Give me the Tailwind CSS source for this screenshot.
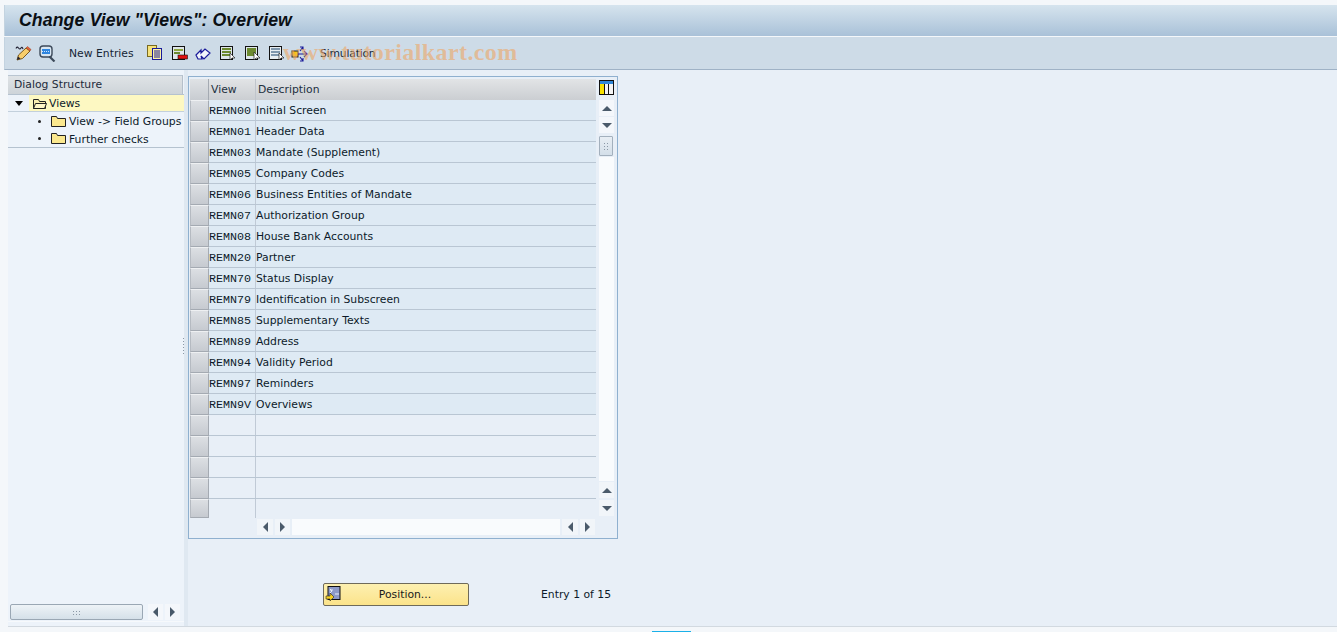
<!DOCTYPE html>
<html lang="en">
<head>
<meta charset="utf-8" />
<title>Change View "Views": Overview</title>
<script src="https://cdn.jsdelivr.net/npm/@tailwindcss/browser@4"></script>
</head>
<body class="bg-white">
<div class="relative w-[1337px] h-[632px] overflow-hidden bg-[#f4f7fa] font-['DejaVu_Sans',sans-serif] text-[10.8px] text-[#0c1a2a]">

  <!-- title bar -->
  <div class="ml-[4px] mt-[5px] h-[31px] bg-gradient-to-b from-[#d6e4ee] to-[#a9c1d8] border-l border-[#c3d3e0] pl-[14px] flex items-center">
    <h1 class="font-['Liberation_Sans',sans-serif] font-bold italic text-[17.7px] text-[#0a0f14] tracking-[0.1px]">Change View "Views": Overview</h1>
  </div>

  <!-- toolbar -->
  <div class="ml-[4px] mt-[1px] h-[33px] bg-[#cddbe7] border-b border-[#9fb2c6] border-l border-l-[#c3d3e0] flex items-center pl-[10px]">
    <svg class="w-[17px] h-[17px]" viewBox="0 0 17 17"><path d="M1 3.500q1-2.500 2.500-.5t2.500 0 2 1" fill="none" stroke="#223" stroke-width="1.100"/><path d="M2 15l1.500-5L11 3l4 3-7.500 7.500z" fill="#f7cd6a" stroke="#6b4a10" stroke-width=".9"/><path d="M2 15l1-3.500 2.500 2z" fill="#223"/><path d="M11 3l1.500-1.500 3.500 3L15 6z" fill="#e8603a" stroke="#8a3a1a" stroke-width=".5"/></svg>
    <svg class="w-[17px] h-[17px] ml-[7px]" viewBox="0 0 17 17"><rect x="1" y="1" width="12" height="11" rx="3" fill="#d8e6f2" stroke="#3d4a5a" stroke-width="1.400"/><rect x="3" y="4" width="8" height="5" fill="#2f86e0"/><path d="M3 6.500h8" stroke="#fff" stroke-width=".8" stroke-dasharray="1 1"/><path d="M10.500 11.500l5 5" stroke="#3d4a5a" stroke-width="2.200"/></svg>
    <span class="ml-[13px] w-[66px] pt-[2px] text-[#152535] whitespace-nowrap">New Entries</span>
    <svg class="w-[16px] h-[16px] ml-[12px]" viewBox="0 0 16 16"><rect x=".5" y=".5" width="9" height="11" fill="#f6e27a" stroke="#7a6a20"/><rect x="5.500" y="3.500" width="9" height="11" fill="#fbf1a8" stroke="#1a1a9a"/><path d="M7 6h6M7 8h6M7 10h6M7 12h6" stroke="#1a1a9a"/></svg>
    <svg class="w-[17px] h-[16px] ml-[8px]" viewBox="0 0 17 16"><rect x="1.500" y="1.500" width="12" height="13" fill="#dfe6ea" stroke="#111"/><rect x="3" y="4" width="9" height="2" fill="#8fa640"/><rect x="3" y="7" width="6" height="2" fill="#6d8a30"/><rect x="7" y="10" width="9.500" height="4" fill="#e01010" stroke="#111" stroke-width=".6"/></svg>
    <svg class="w-[17px] h-[15px] ml-[7px]" viewBox="0 0 17 15"><path d="M1 9l5-5v3l4-4 5 4-6 6-3-3 1 3H3z" fill="#f2f6fa" stroke="#1a1a9a" stroke-width="1.200"/></svg>
    <svg class="w-[17px] h-[16px] ml-[7px]" viewBox="0 0 17 16"><rect x="1.500" y="1.500" width="12" height="13" fill="#dfe6ea" stroke="#111"/><path d="M3 4h9M3 7h9M3 10h9" stroke="#6d8a30" stroke-width="2"/><path d="M11 8v7l2-2 3 0z" fill="#fff" stroke="#222" stroke-width=".7"/></svg>
    <svg class="w-[17px] h-[16px] ml-[8px]" viewBox="0 0 17 16"><rect x="1.500" y="1.500" width="12" height="13" fill="#dfe6ea" stroke="#111"/><rect x="3" y="3" width="9" height="8" fill="#6d8a30"/><path d="M10 7v8l2-2 4 0z" fill="#fff" stroke="#222" stroke-width=".7"/></svg>
    <svg class="w-[17px] h-[16px] ml-[7px]" viewBox="0 0 17 16"><rect x="1.500" y="1.500" width="12" height="13" fill="#e8eef2" stroke="#111"/><path d="M3 4h9M3 7h9M3 10h9" stroke="#7f97ad" stroke-width="2"/><path d="M11 8v7l2-2 3 0z" fill="#fff" stroke="#222" stroke-width=".7"/></svg>
    <svg class="w-[17px] h-[17px] ml-[6px]" viewBox="0 0 17 17"><rect x="1" y="6" width="6" height="6" fill="#f5c518" stroke="#222"/><path d="M7 9h9M13 6l3 3-3 3M9 2h3v3M12 2l-3 4M9 16h3v-3M12 16l-3-4" fill="none" stroke="#1a1a9a" stroke-width="1.100"/></svg>
    <span class="ml-[12px] pt-[2px] text-[#152535] tracking-[-0.2px]">Simulation</span>
  </div>

  <!-- body -->
  <div class="ml-[8px] h-[557px] flex bg-[#e8eff7] border-b border-[#d2d9e0]">
    <!-- left tree panel -->
    <div class="w-[176px] bg-[#edf3fa] flex flex-col pt-[5px]">
      <div class="h-[19px] mr-[1px] bg-gradient-to-b from-[#dfe3e6] to-[#ced4d9] border-t border-[#b9c5d1] border-r border-r-[#b5bfca] pl-[6px] flex items-center text-[#1c2a3a]">Dialog Structure</div>
      <div class="h-[18px] flex items-center border-b border-[#c3d0dc] border-t border-t-[#b5c2cf]">
        <span class="ml-[7px] w-0 h-0 border-x-[4px] border-x-transparent border-t-[5px] border-t-black"></span>
        <div class="ml-[6px] flex-1 h-full bg-[#fdf8c2] flex items-center pl-[3px]">
          <svg class="w-[16px] h-[13px]" viewBox="0 0 16 13"><path d="M1.500 11.500V2.500h5l1 2h6v7z" fill="#fbeeb0" stroke="#222"/><path d="M1.500 11.500l2-5h11l-2 5z" fill="#fff6c8" stroke="#222"/></svg>
          <span class="ml-[1px] pt-[2px]">Views</span>
        </div>
      </div>
      <div class="h-[18px] flex items-center whitespace-nowrap overflow-hidden">
        <span class="ml-[30px] w-[3px] h-[3px] rounded-full bg-[#222]"></span>
        <svg class="ml-[10px] w-[15px] h-[13px] shrink-0" viewBox="0 0 15 13"><path d="M.5 11.500V1.500h5l1 2h8v8z" fill="#fbe88e" stroke="#222"/></svg>
        <span class="ml-[3px] pt-[2px]">View -&gt; Field Groups</span>
      </div>
      <div class="h-[18px] flex items-center border-b border-[#b5c2cf] whitespace-nowrap">
        <span class="ml-[30px] w-[3px] h-[3px] rounded-full bg-[#222]"></span>
        <svg class="ml-[10px] w-[15px] h-[13px]" viewBox="0 0 15 13"><path d="M.5 11.500V1.500h5l1 2h8v8z" fill="#fbe88e" stroke="#222"/></svg>
        <span class="ml-[3px] pt-[4px]">Further checks</span>
      </div>
      <div class="flex-1"></div>
      <div class="h-[18px] flex items-start border-b border-[#f6f9fc] mb-[4px]">
        <div class="ml-[2px] w-[133px] h-[16px] bg-gradient-to-b from-[#eef3f7] to-[#d5e0e9] border border-[#9aa7b4] rounded-[2px] flex items-center justify-center">
          <span class="w-[10px] h-[5px] bg-[radial-gradient(#8a97a5_1px,transparent_1px)] bg-[length:3px_3px]"></span>
        </div>
        <div class="ml-[5px] w-[15px] h-[16px] bg-[#f4f7fb] flex items-center justify-center"><span class="w-0 h-0 border-y-[5px] border-y-transparent border-r-[5px] border-r-[#4a5a6a]"></span></div>
        <div class="ml-[2px] w-[15px] h-[16px] bg-[#f4f7fb] flex items-center justify-center"><span class="w-0 h-0 border-y-[5px] border-y-transparent border-l-[5px] border-l-[#4a5a6a]"></span></div>
      </div>
    </div>

    <!-- splitter -->
    <div class="w-[4px] bg-[#dfe8f1] relative">
      <span class="absolute left-[-2px] top-[267px] w-[3px] h-[18px] bg-[radial-gradient(#8a97a5_0.7px,transparent_0.8px)] bg-[length:3px_3px]"></span>
    </div>

    <!-- main area -->
    <div class="flex-1 flex flex-col pl-[0px] pt-[6px]">
      <div class="w-[430px] h-[463px] border border-[#8fb0cf] bg-[#e8eff7] flex pl-[1px] pt-[2px]">
        <div class="w-[407px]">
          <!-- table header -->
          <div class="h-[21px] flex">
            <div class="w-[19px] bg-gradient-to-b from-[#dfe2e5] to-[#c8ccd1] border-r border-[#a4aab2]"></div>
            <div class="w-[47px] bg-gradient-to-b from-[#e2e4e6] to-[#cbced2] border-r border-[#c0c5cc] pl-[2px] pt-[2px] flex items-center text-[#22303e]">View</div>
            <div class="flex-1 bg-gradient-to-b from-[#e2e4e6] to-[#cbced2] pl-[2px] pt-[2px] flex items-center text-[#22303e]">Description</div>
          </div>
          <div id="rows"></div>
        </div>
        <!-- vertical scrollbar -->
        <div class="w-[18px] ml-[3px] flex flex-col items-start">
          <svg class="w-[17px] h-[18px] -ml-[1px]" viewBox="0 0 17 18"><rect x="1" y="1" width="15" height="15" fill="#111"/><rect x="2" y="2" width="13" height="3" fill="#2f86d6"/><rect x="2" y="5" width="4" height="10" fill="#f7e000"/><rect x="7" y="5" width="3" height="10" fill="#f4f4f4"/><rect x="11" y="5" width="4" height="10" fill="#f4f4f4"/></svg>
          <div class="mt-[3px] w-[15px] h-[16px] bg-[#f4f7fb] flex items-center justify-center"><span class="w-0 h-0 border-x-[5px] border-x-transparent border-b-[5px] border-b-[#4a5a6a]"></span></div>
          <div class="mt-[1px] w-[15px] h-[16px] bg-[#f4f7fb] flex items-center justify-center"><span class="w-0 h-0 border-x-[5px] border-x-transparent border-t-[5px] border-t-[#4a5a6a]"></span></div>
          <div class="mt-[3px] w-[14px] h-[20px] bg-gradient-to-b from-[#e8eef4] to-[#d4dfe9] border border-[#a3b0bd] rounded-[1px] flex items-center justify-center">
            <span class="w-[7px] h-[9px] bg-[radial-gradient(#8a97a5_1px,transparent_1px)] bg-[length:3px_3px]"></span>
          </div>
          <div class="mt-[1px] w-[15px] h-[324px] bg-[#f9fbfd]"></div>
          <div class="mt-[1px] w-[15px] h-[16px] bg-[#f1f5f9] flex items-center justify-center"><span class="w-0 h-0 border-x-[5px] border-x-transparent border-b-[5px] border-b-[#4a5a6a]"></span></div>
          <div class="mt-[2px] w-[15px] h-[16px] bg-[#f1f5f9] flex items-center justify-center"><span class="w-0 h-0 border-x-[5px] border-x-transparent border-t-[5px] border-t-[#4a5a6a]"></span></div>
        </div>
      </div>

      <!-- position row -->
      <div class="mt-[44px] ml-[135px] flex items-center">
        <button class="w-[146px] h-[23px] bg-gradient-to-b from-[#fdf0b0] to-[#fbe38a] border border-[#6e6a5a] rounded-[2px] flex items-center relative text-[#1a1a1a]">
          <svg class="absolute left-[1px] top-[1px] w-[16px] h-[17px]" viewBox="0 0 16 17"><rect x="3" y="1.500" width="12" height="13" fill="#8d9ac8" stroke="#111"/><path d="M5 5h3M10 9h4M5 4l2 2-2 2" fill="none" stroke="#e8eef8"/><path d="M1 11h4V8l4 4-4 4v-2H1z" fill="#f5d020" stroke="#222" stroke-width=".6"/></svg>
          <span class="w-full text-center pl-[18px] pt-[2px]">Position...</span>
        </button>
        <span class="ml-[72px] pt-[2px]">Entry 1 of 15</span>
      </div>
    </div>
  </div>

  <!-- watermark -->
  <span class="absolute left-[283px] top-[36px] font-['Liberation_Serif',serif] font-bold text-[24px] leading-[32px] tracking-[0.4px] text-[#eda664]/60 pointer-events-none">www.tutorialkart.com</span>
  <span class="absolute left-[652px] top-[631px] w-[39px] h-[1px] bg-[#1ab0e8]"></span>
</div>

<script>
  const entries = [
    ['REMN00', 'Initial Screen'],
    ['REMN01', 'Header Data'],
    ['REMN03', 'Mandate (Supplement)'],
    ['REMN05', 'Company Codes'],
    ['REMN06', 'Business Entities of Mandate'],
    ['REMN07', 'Authorization Group'],
    ['REMN08', 'House Bank Accounts'],
    ['REMN20', 'Partner'],
    ['REMN70', 'Status Display'],
    ['REMN79', 'Identification in Subscreen'],
    ['REMN85', 'Supplementary Texts'],
    ['REMN89', 'Address'],
    ['REMN94', 'Validity Period'],
    ['REMN97', 'Reminders'],
    ['REMN9V', 'Overviews'],
    ['', ''], ['', ''], ['', ''], ['', ''], ['', ''],
  ];
  const selector = 'w-[19px] shrink-0 bg-gradient-to-b from-[#dcdfe3] to-[#c6cad0] border border-[#a4aab2] border-t-[#eef0f2] border-l-[#b5bac1]';
  document.querySelector('#rows').innerHTML = entries.map(([view, text], i) => {
    const last = i === entries.length - 1;
    return `
    <div class="${last ? 'h-[19px]' : 'h-[21px]'} flex">
      <div class="${selector}"></div>
      <div class="flex-1 flex ${last ? '' : 'border-b border-[#b9c6d3]'} ${view ? 'bg-[#deeaf4]' : 'bg-[#e8eff7]'}">
        <div class="w-[47px] border-r border-[#c0cad6] pt-[3px] font-['Liberation_Mono',monospace] text-[11.7px] leading-[16px]">${view}</div>
        <div class="flex-1 pt-[2px] flex items-center">${text}</div>
      </div>
    </div>`;
  }).join('');
</script>

<!-- horizontal scrollbar drawn over the table box -->
<div class="absolute left-[257px] top-[519px] flex gap-[2px]">
  <div class="w-[16px] h-[16px] bg-[#f1f5f9] flex items-center justify-center"><span class="w-0 h-0 border-y-[5px] border-y-transparent border-r-[5px] border-r-[#4a5a6a]"></span></div>
  <div class="w-[15px] h-[16px] bg-[#f1f5f9] flex items-center justify-center"><span class="w-0 h-0 border-y-[5px] border-y-transparent border-l-[5px] border-l-[#4a5a6a]"></span></div>
  <div class="w-[268px] h-[16px] bg-[#f9fbfd]"></div>
  <div class="w-[16px] h-[16px] bg-[#f1f5f9] flex items-center justify-center"><span class="w-0 h-0 border-y-[5px] border-y-transparent border-r-[5px] border-r-[#4a5a6a]"></span></div>
  <div class="w-[15px] h-[16px] bg-[#f1f5f9] flex items-center justify-center"><span class="w-0 h-0 border-y-[5px] border-y-transparent border-l-[5px] border-l-[#4a5a6a]"></span></div>
</div>
</body>
</html>
